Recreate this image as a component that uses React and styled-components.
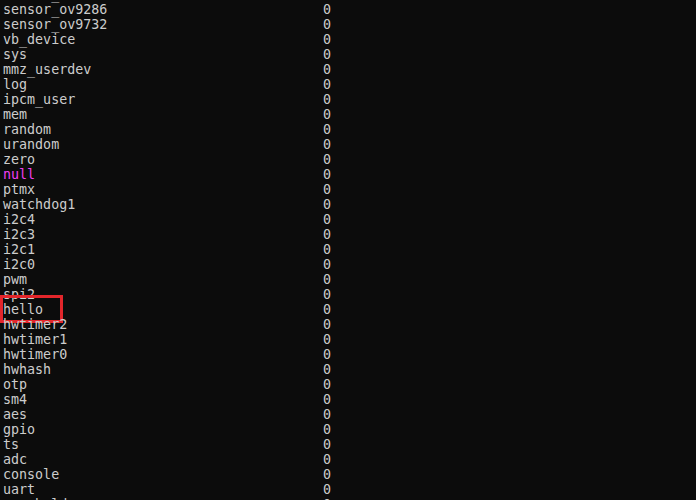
import React from 'react';
import styled, { createGlobalStyle } from 'styled-components';

const GlobalStyle = createGlobalStyle`
  html, body {
    margin: 0;
    padding: 0;
    background: #0c0c0c;
  }
`;

const Screen = styled.div`
  width: 696px;
  height: 500px;
  overflow: hidden;
  background: #0c0c0c;
  padding-left: 3px;
  box-sizing: border-box;
`;

const Lines = styled.div`
  margin-top: -13px;
  font-family: "DejaVu Sans Mono", "Liberation Mono", monospace;
  font-size: 13.33px;
  line-height: 15px;
  color: #cccccc;
  white-space: pre;
`;

const Row = styled.div`
  height: 15px;
`;

const Name = styled.span`
  display: inline-block;
  width: 320px;
  position: relative;
  color: ${props => (props.highlight ? '#f23ff2' : 'inherit')};
`;

const Mark = styled.span`
  position: relative;
  display: inline-block;

  &::after {
    content: '';
    position: absolute;
    left: -3px;
    top: -7px;
    width: 63px;
    height: 28px;
    border: 3px solid #e3262b;
    box-sizing: border-box;
  }
`;

const devices = [
  'sensor_ov5647',
  'sensor_ov9286',
  'sensor_ov9732',
  'vb_device',
  'sys',
  'mmz_userdev',
  'log',
  'ipcm_user',
  'mem',
  'random',
  'urandom',
  'zero',
  'null',
  'ptmx',
  'watchdog1',
  'i2c4',
  'i2c3',
  'i2c1',
  'i2c0',
  'pwm',
  'spi2',
  'hello',
  'hwtimer2',
  'hwtimer1',
  'hwtimer0',
  'hwhash',
  'otp',
  'sm4',
  'aes',
  'gpio',
  'ts',
  'adc',
  'console',
  'uart',
  'mem_hold',
];

function App() {
  return (
    <Screen>
      <GlobalStyle />
      <Lines>
        {devices.map(name => (
          <Row key={name}>
            <Name highlight={name === 'null'}>
              {name === 'hello' ? <Mark>{name}</Mark> : name}
            </Name>
            0
          </Row>
        ))}
      </Lines>
    </Screen>
  );
}

export default App;
